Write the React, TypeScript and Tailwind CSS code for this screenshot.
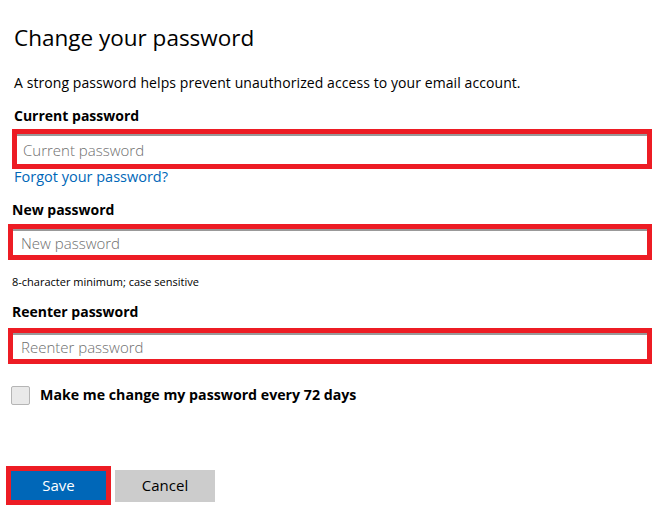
export default function App() {
  return (
    <div className="w-[662px] h-[525px] bg-white text-black font-['Open_Sans','Noto_Sans',sans-serif] overflow-hidden">
      {/* HEADER */}
      <h1 className="mt-[22px] pl-[14px] h-[32px] text-[22.5px] leading-[32px] font-normal">
        Change your password
      </h1>
      <p className="mt-[19px] pl-[14px] h-[20px] text-[14px] leading-[20px] tracking-[0.08px]">
        A strong password helps prevent unauthorized access to your email account.
      </p>

      {/* CURRENT */}
      <label className="block mt-[13px] pl-[14px] h-[20px] text-[14px] leading-[20px] font-bold">
        Current password
      </label>
      <div className="mt-[3px] ml-[12px] w-[640px] h-[40px] border-[5px] border-[#ed1c24]">
        <input
          type="password"
          placeholder="Current password"
          className="w-full h-full border-t-2 border-[#999] px-[6px] text-[15px] font-light text-black placeholder:text-[#6e6e6e] outline-none"
        />
      </div>
      <a href="#" className="block pl-[14px] h-[16px] text-[14.5px] leading-[16px] text-[#0067b8]">
        Forgot your password?
      </a>

      {/* NEW */}
      <label className="block mt-[15px] pl-[12px] h-[20px] text-[14px] leading-[20px] font-bold">
        New password
      </label>
      <div className="mt-[4px] ml-[8px] w-[644px] h-[36px] border-[5px] border-[#ed1c24]">
        <input
          type="password"
          placeholder="New password"
          className="w-full h-full border-t-2 border-[#999] px-[8px] text-[15px] font-light text-black placeholder:text-[#6e6e6e] outline-none"
        />
      </div>
      <p className="mt-[14px] pl-[12px] h-[16px] text-[11px] leading-[16px]">
        8-character minimum; case sensitive
      </p>

      {/* REENTER */}
      <label className="block mt-[12px] pl-[12px] h-[20px] text-[14px] leading-[20px] font-bold">
        Reenter password
      </label>
      <div className="mt-[6px] ml-[8px] w-[644px] h-[36px] border-[5px] border-[#ed1c24]">
        <input
          type="password"
          placeholder="Reenter password"
          className="w-full h-full border-t-2 border-[#999] px-[8px] text-[15px] font-light text-black placeholder:text-[#6e6e6e] outline-none"
        />
      </div>

      {/* CHECKBOX */}
      <label className="mt-[21px] ml-[11px] h-[20px] flex items-center gap-[10px]">
        <span className="w-[19px] h-[19px] rounded-[2px] border border-[#b5b5b5] bg-[#e9e9e9]" />
        <span className="text-[14.2px] leading-[20px] font-bold">
          Make me change my password every 72 days
        </span>
      </label>

      {/* BUTTONS */}
      <div className="mt-[61px] ml-[6px] flex items-center gap-[4px]">
        <div className="border-[5px] border-[#ed1c24]">
          <button className="w-[95px] h-[29px] bg-[#0067b8] text-white text-[15px]">Save</button>
        </div>
        <button className="w-[100px] h-[32px] bg-[#cccccc] text-black text-[15px]">Cancel</button>
      </div>
    </div>
  );
}
